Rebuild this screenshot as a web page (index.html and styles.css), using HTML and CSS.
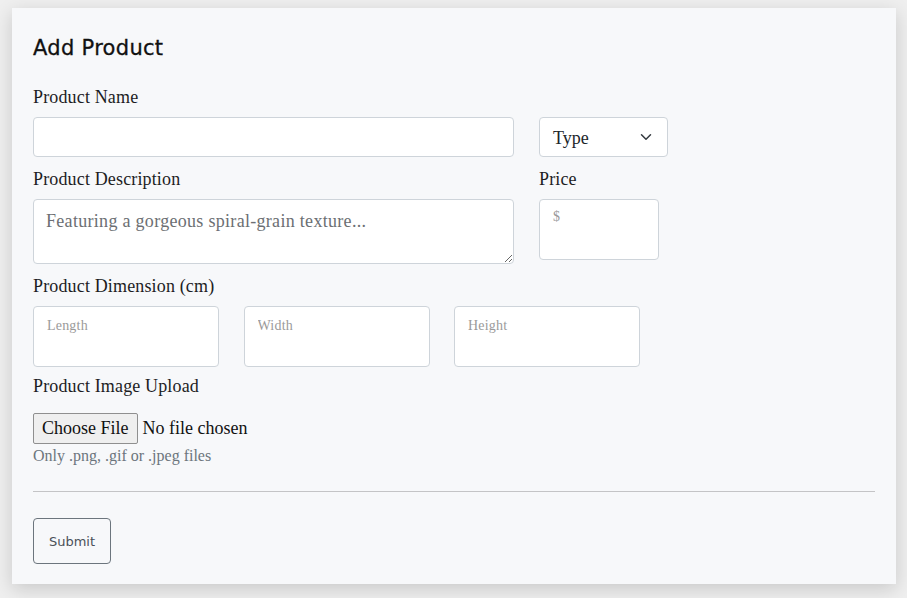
FILE: index.html
```html
<!DOCTYPE html>
<html lang="en">
<head>
<meta charset="utf-8">
<title>Add Product</title>
<link rel="stylesheet" href="styles.css">
</head>
<body>
<div class="card">
  <h1 class="title">Add Product</h1>
  <div class="grid">
    <label class="label">Product Name</label>
    <div></div>
    <input class="control name" type="text">
    <div class="select">
      <span>Type</span>
      <svg width="16" height="12" viewBox="0 0 16 16"><path d="M2 5l6 6 6-6" fill="none" stroke="#343a40" stroke-width="2" stroke-linecap="round" stroke-linejoin="round"/></svg>
    </div>
    <label class="label gap">Product Description</label>
    <label class="label gap">Price</label>
    <textarea class="control desc" placeholder="Featuring a gorgeous spiral-grain texture..."></textarea>
    <input class="control small price" type="text" placeholder="$">
  </div>
  <label class="label gap block">Product Dimension (cm)</label>
  <div class="dims">
    <input class="control small dim" type="text" placeholder="Length">
    <input class="control small dim" type="text" placeholder="Width">
    <input class="control small dim" type="text" placeholder="Height">
  </div>
  <label class="label upload block">Product Image Upload</label>
  <div class="file">
    <span class="file-btn">Choose File</span>
    <span class="file-text">No file chosen</span>
  </div>
  <div class="help">Only .png, .gif or .jpeg files</div>
  <hr class="rule">
  <button class="submit" type="button">Submit</button>
</div>
</body>
</html>
```

FILE: styles.css
```css
html, body {
  margin: 0;
  padding: 0;
}
body {
  background: #efefef;
  padding: 8px 11px 14px 12px;
  font-family: "Liberation Serif", "DejaVu Serif", serif;
  color: #212529;
}
.card {
  background: #f7f8fa;
  box-shadow: 0 5px 18px rgba(0, 0, 0, 0.16);
  padding: 28px 21px 20px 21px;
}
.title {
  margin: 0 0 25px 0;
  font-family: "DejaVu Sans", sans-serif;
  font-weight: normal;
  font-size: 21px;
  line-height: 24px;
  color: #111;
  letter-spacing: 0.3px;
  -webkit-text-stroke: 0.3px #111;
}
.grid {
  display: grid;
  grid-template-columns: 481px auto;
  column-gap: 25px;
  align-items: start;
  justify-items: start;
}
.label {
  font-size: 18px;
  line-height: 24px;
  margin-bottom: 8px;
  color: #1d1d1f;
  letter-spacing: 0.15px;
}
.label.gap {
  margin-top: 10px;
}
.label.block {
  display: block;
}
.label.upload {
  margin-top: 7px;
  margin-bottom: 15px;
}
.control {
  box-sizing: border-box;
  border: 1px solid #ced4da;
  border-radius: 4px;
  background: #fff;
  font-family: "Liberation Serif", "DejaVu Serif", serif;
  color: #212529;
  outline: none;
  margin: 0;
}
.name {
  width: 481px;
  height: 40px;
  padding: 6px 12px;
  font-size: 18px;
}
.select {
  box-sizing: border-box;
  width: 129px;
  height: 40px;
  border: 1px solid #ced4da;
  border-radius: 4px;
  background: #fff;
  display: flex;
  align-items: center;
  justify-content: space-between;
  padding: 0 13px 0 13px;
  font-size: 18px;
  color: #212529;
}
.select span {
  padding-top: 3px;
}
.desc {
  width: 481px;
  height: 65px;
  padding: 9px 12px 7px 12px;
  font-size: 18px;
  line-height: 24px;
  letter-spacing: 0.3px;
  resize: vertical;
  display: block;
}
.desc::placeholder {
  color: #6c6f73;
}
.small {
  height: 61px;
  font-size: 14px;
  line-height: 18px;
  padding: 10px 13px 31px 13px;
  letter-spacing: 0.2px;
}
.small::placeholder {
  color: #9a9a9a;
}
.price {
  width: 120px;
  padding-top: 8px;
  padding-bottom: 33px;
}
.dims {
  display: flex;
  justify-content: space-between;
  width: 607px;
}
.dim {
  width: 186px;
}
.file {
  display: flex;
  align-items: center;
  gap: 5px;
  height: 31px;
}
.file-btn {
  box-sizing: border-box;
  height: 31px;
  display: flex;
  align-items: center;
  padding: 0 8px;
  background: #efefef;
  border: 1px solid #8f8f8f;
  border-radius: 2px;
  font-size: 18px;
  color: #111;
}
.file-text {
  font-size: 18px;
  color: #111;
}
.help {
  margin-top: 2px;
  font-size: 16px;
  line-height: 20px;
  color: #6c757d;
}
.rule {
  margin: 25px 0 26px 0;
  border: 0;
  border-top: 1px solid #c4c4c6;
  height: 0;
}
.submit {
  box-sizing: border-box;
  width: 78px;
  height: 46px;
  display: block;
  background: transparent;
  border: 1px solid #6c757d;
  border-radius: 4px;
  font-family: "DejaVu Sans", sans-serif;
  font-size: 13px;
  color: #4a5058;
  padding: 0;
}
```
